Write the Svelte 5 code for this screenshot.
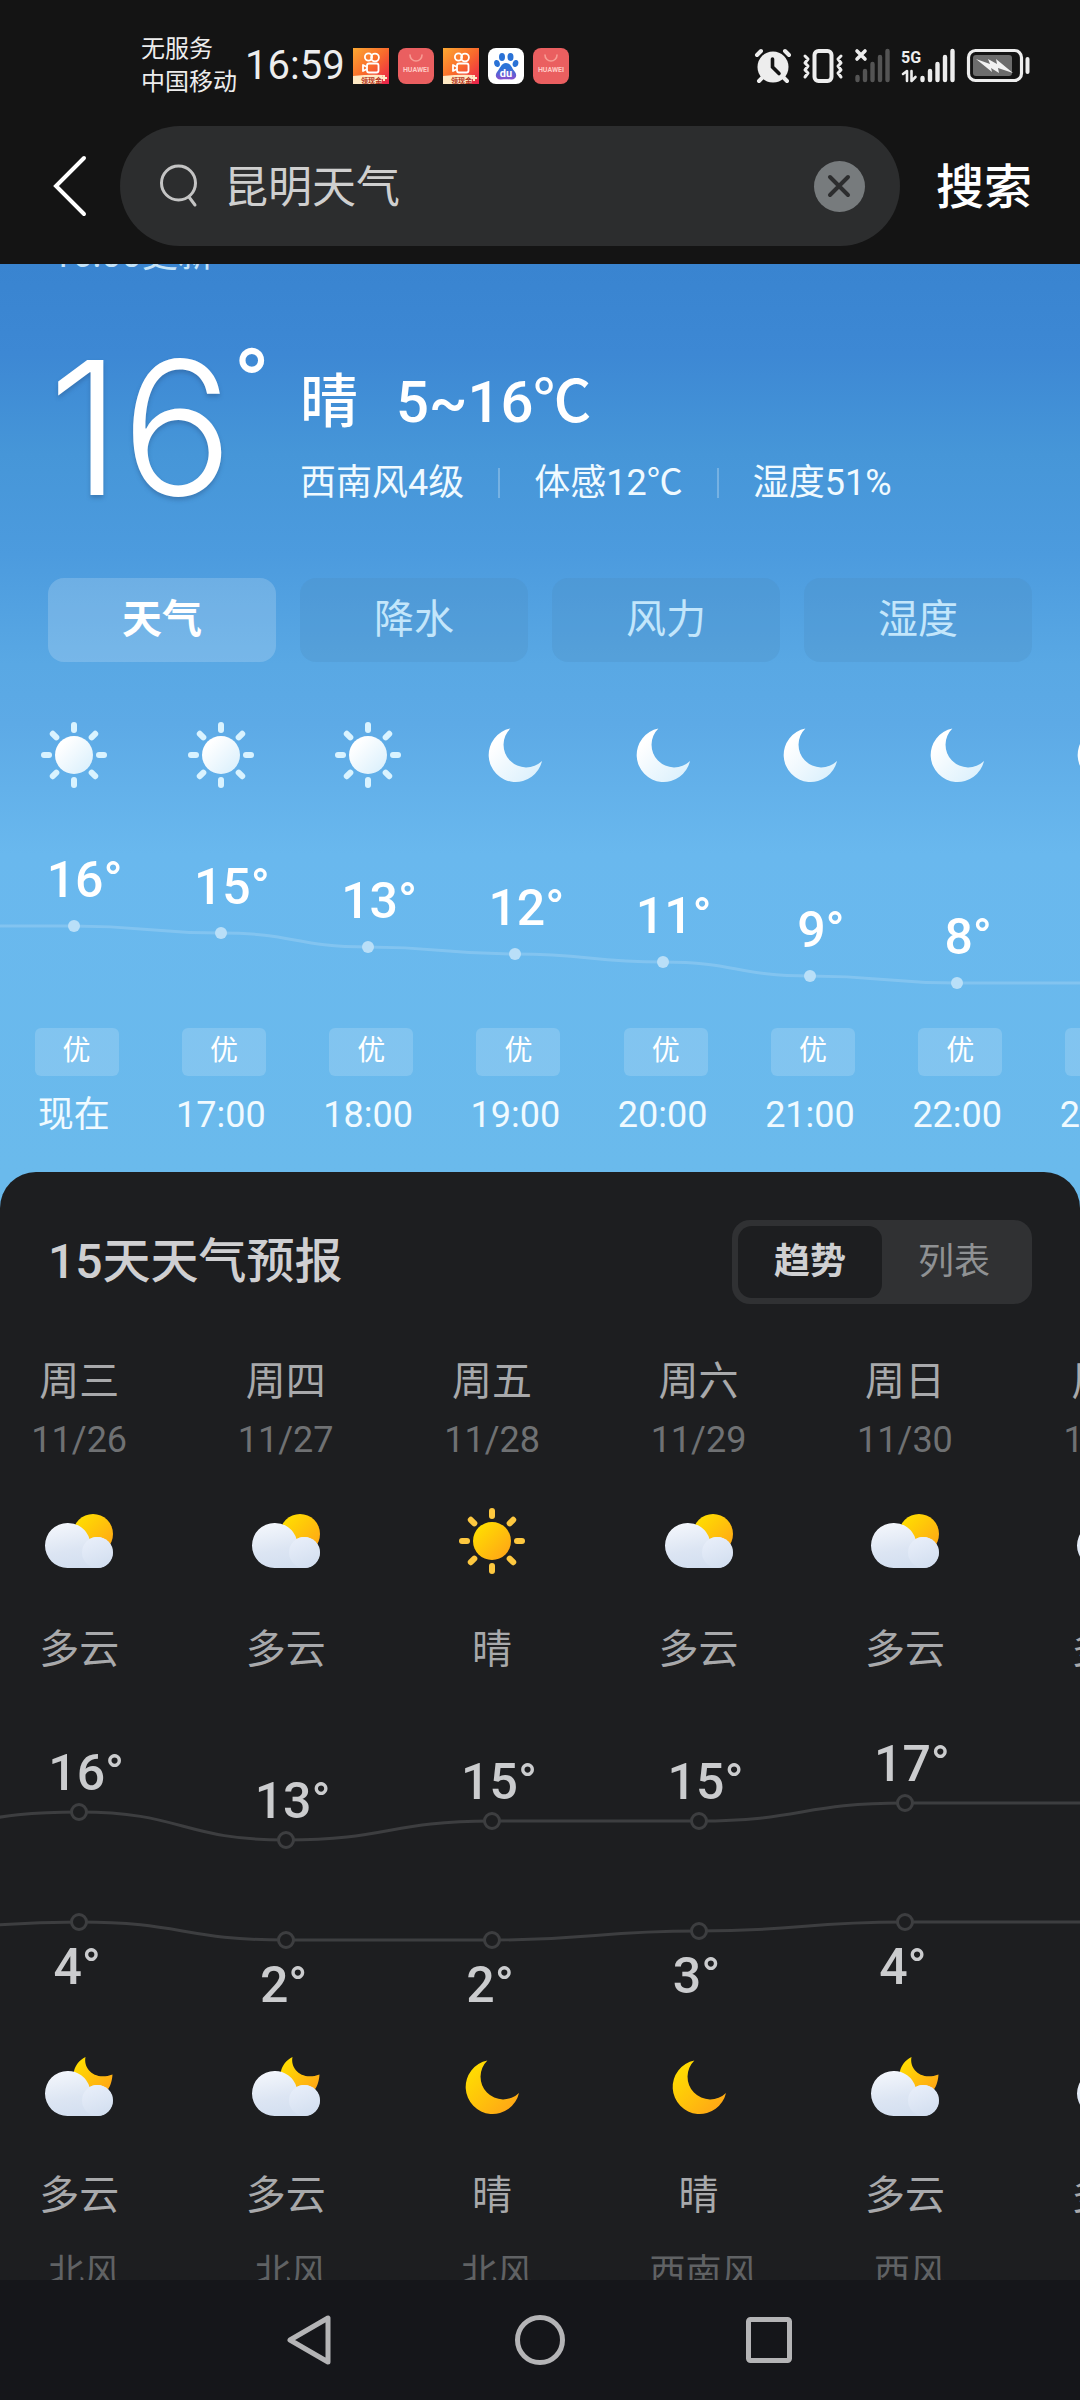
<script>
	let query = '昆明天气';
	let activeTab = '天气';
	let activeView = '趋势';

	const tabs = ['天气', '降水', '风力', '湿度'];
	const views = ['趋势', '列表'];

	const hours = [
		{ time: '现在', icon: 'sun', temp: 16 },
		{ time: '17:00', icon: 'sun', temp: 15 },
		{ time: '18:00', icon: 'sun', temp: 13 },
		{ time: '19:00', icon: 'moon', temp: 12 },
		{ time: '20:00', icon: 'moon', temp: 11 },
		{ time: '21:00', icon: 'moon', temp: 9 },
		{ time: '22:00', icon: 'moon', temp: 8 },
		{ time: '23:00', icon: 'moon', temp: 8 }
	];

	const days = [
		{ name: '周三', date: '11/26', day: 'cloudSun', dayText: '多云', high: 16, low: 4, night: 'cloudMoon', nightText: '多云', wind: '北风' },
		{ name: '周四', date: '11/27', day: 'cloudSun', dayText: '多云', high: 13, low: 2, night: 'cloudMoon', nightText: '多云', wind: '北风' },
		{ name: '周五', date: '11/28', day: 'sun', dayText: '晴', high: 15, low: 2, night: 'moon', nightText: '晴', wind: '北风' },
		{ name: '周六', date: '11/29', day: 'cloudSun', dayText: '多云', high: 15, low: 3, night: 'moon', nightText: '晴', wind: '西南风' },
		{ name: '周日', date: '11/30', day: 'cloudSun', dayText: '多云', high: 17, low: 4, night: 'cloudMoon', nightText: '多云', wind: '西风' },
		{ name: '周一', date: '12/01', day: 'cloudSun', dayText: '多云', high: 17, low: 4, night: 'cloudMoon', nightText: '多云', wind: '西风' }
	];

	const hourY = (t) => Math.round(137 + (16 - t) * 7.1);
	const highY = (t) => Math.round(139 + (16 - t) * 9.2);
	const lowY = (t) => Math.round(249 + (4 - t) * 9.2);

	// one unit per column, the first value belongs to the column before the visible ones
	function curve(ys) {
		let d = `M-0.5 ${ys[0]}`;
		for (let i = 1; i < ys.length; i++) {
			d += ` C${i - 1} ${ys[i - 1]} ${i - 1} ${ys[i]} ${i - 0.5} ${ys[i]}`;
		}
		return d;
	}

	const hourLine = curve([16, ...hours.map((h) => h.temp)].map(hourY));
	const highLine = curve([14, ...days.map((d) => d.high)].map(highY));
	const lowLine = curve([3, ...days.map((d) => d.low)].map(lowY));
	const rays = [0, 45, 90, 135, 180, 225, 270, 315];
</script>

{#snippet cloud()}
	<path d="M22.5 16A22.5 22.5 0 0 0 22.5 61H52.5A15.5 15.5 0 1 0 44.5 32A22.5 22.5 0 0 0 22.5 16Z" fill="url(#cloud)" />
	<circle cx="52.5" cy="45.5" r="15.5" fill="url(#puff)" />
{/snippet}

{#snippet weather(kind, tone)}
	<svg class="weather" viewBox="0 0 68 68" aria-hidden="true">
		{#if kind === 'sun'}
			<g stroke={tone === 'white' ? '#d9f3ff' : '#fdc840'} stroke-width="6" stroke-linecap="round">
				{#each rays as angle}
					<path d="M34 4v5" transform="rotate({angle} 34 34)" />
				{/each}
			</g>
			<circle cx="34" cy="34" r="19" fill="url(#{tone})" />
		{:else if kind === 'moon'}
			<path
				transform="translate(7 7)"
				d="M22.4 .5A27 27 0 1 0 54 33A22.6 22.6 0 0 1 22.4 .5Z"
				fill="url(#{tone})"
			/>
		{:else if kind === 'cloudSun'}
			<circle cx="48" cy="27" r="20" fill="url(#gold)" />
			{@render cloud()}
		{:else}
			<path
				transform="translate(0 4)"
				d="M40.5 0C38 12 50 24 67.5 17.5C67 25 65 31 60 36L32 34C25 21 28 6 40.5 0Z"
				fill="url(#gold)"
			/>
			<g transform="translate(0 2)">
				{@render cloud()}
			</g>
		{/if}
	</svg>
{/snippet}

{#snippet videoApp()}
	<svg class="app" viewBox="0 0 36 36" aria-hidden="true">
		<rect width="36" height="36" fill="url(#video)" />
		<g fill="none" stroke="#fff" stroke-width="1.8">
			<circle cx="15.5" cy="9" r="3.6" />
			<circle cx="22" cy="9.5" r="3.9" />
			<rect x="14" y="15.5" width="11.5" height="9" rx="2" />
			<path d="M14 19l-4-2v6l4-2" stroke-linejoin="round" />
		</g>
		<path d="M0 28q18-2 30-1l-2 9H0z" fill="#ffe9c4" />
		<text x="8" y="35" font-size="7" font-weight="700" fill="#b5321c">领现金</text>
		<path d="M31 27v6M28 30h6" stroke="#ffe9c4" stroke-width="2" />
	</svg>
{/snippet}

{#snippet storeApp()}
	<svg class="app" viewBox="0 0 36 36" aria-hidden="true">
		<rect width="36" height="36" rx="8" fill="#ea5f60" />
		<path d="M12 7a6 6 0 0 0 12 0" fill="none" stroke="#f79c94" stroke-width="1.6" stroke-linecap="round" />
		<text x="18" y="24" text-anchor="middle" font-size="7" font-weight="700" fill="#ffc9c4">HUAWEI</text>
	</svg>
{/snippet}

<svg class="defs" width="0" height="0" aria-hidden="true">
	<defs>
		<linearGradient id="white" x1="0" y1="0" x2="1" y2="1">
			<stop offset="0.2" stop-color="#fff" />
			<stop offset="1" stop-color="#d6eefc" />
		</linearGradient>
		<linearGradient id="gold" x1="0" y1="0" x2="1" y2="1">
			<stop offset="0.1" stop-color="#ffdf00" />
			<stop offset="0.9" stop-color="#ffa616" />
		</linearGradient>
		<linearGradient id="cloud" x1="0.2" y1="0" x2="0.5" y2="1">
			<stop offset="0" stop-color="#f4f7fc" />
			<stop offset="0.6" stop-color="#dce5f3" />
			<stop offset="1" stop-color="#d3dff0" />
		</linearGradient>
		<linearGradient id="puff" x1="0.2" y1="0" x2="0.6" y2="1">
			<stop offset="0" stop-color="#e9effa" />
			<stop offset="1" stop-color="#d3dff0" />
		</linearGradient>
		<linearGradient id="video" x1="0" y1="0" x2="1" y2="1">
			<stop offset="0" stop-color="#fca832" />
			<stop offset="0.5" stop-color="#f96a2c" />
			<stop offset="1" stop-color="#e91f4d" />
		</linearGradient>
		<linearGradient id="paw" x1="0" y1="0" x2="0" y2="1">
			<stop offset="0.3" stop-color="#2d74d8" />
			<stop offset="1" stop-color="#8a4fd0" />
		</linearGradient>
	</defs>
</svg>

<div class="phone">
	<header>
		<div class="status">
			<div class="carrier">
				<span>无服务</span>
				<span>中国移动</span>
			</div>
			<time class="clock">16:59</time>
			<div class="apps">
				{@render videoApp()}
				{@render storeApp()}
				{@render videoApp()}
				<svg class="app" viewBox="0 0 36 36" aria-hidden="true">
					<rect width="36" height="36" rx="8" fill="#fff" />
					<g fill="#2a72d6">
						<ellipse cx="14" cy="9" rx="3" ry="4" />
						<ellipse cx="22.5" cy="9" rx="3" ry="4" />
						<ellipse cx="9" cy="15.5" rx="2.8" ry="3.6" transform="rotate(-15 9 15.5)" />
						<ellipse cx="27.5" cy="15.5" rx="2.8" ry="3.6" transform="rotate(15 27.5 15.5)" />
					</g>
					<path d="M18 15c5 0 6 6 9 9 3 4 0 8-4 7.5-4-.5-6-.5-10 0C9 32 6 28 9 24c3-3 4-9 9-9z" fill="url(#paw)" />
					<text x="18" y="29" text-anchor="middle" font-size="11" font-weight="700" fill="#fff">du</text>
				</svg>
				{@render storeApp()}
			</div>
			<div class="signals">
				<svg width="36" height="34" viewBox="0 0 36 34" aria-hidden="true">
					<path d="M2 6l4-4M34 6l-4-4M8 28l-4 4M28 28l4 4" stroke="#ededed" stroke-width="4" stroke-linecap="round" />
					<circle cx="18" cy="18" r="15.5" fill="#ededed" />
					<path d="M17.5 10v8l6.5 6.5" fill="none" stroke="#141414" stroke-width="3.6" stroke-linecap="round" />
				</svg>
				<svg width="40" height="34" viewBox="0 0 40 34" fill="none" stroke="#ededed" stroke-linecap="round" stroke-linejoin="round" aria-hidden="true">
					<rect x="11.5" y="2" width="17" height="30" rx="4" stroke-width="4" />
					<path d="M2 7l3 3-3 4 3 3-3 4 3 3-3 4M38 7l-3 3 3 4-3 3 3 4-3 3 3 4" stroke-width="3" />
				</svg>
				<svg width="35" height="34" viewBox="0 0 35 34" stroke-linecap="round" aria-hidden="true">
					<path d="M2 2l8 8M10 2l-8 8" stroke="#ededed" stroke-width="3.6" />
					<path d="M2.5 28v3M10 22v9M17.5 15v16M25 8v23M32.5 2v29" stroke="#545454" stroke-width="4.4" />
				</svg>
				<svg width="53" height="34" viewBox="0 0 53 34" fill="none" stroke="#ededed" stroke-linecap="round" aria-hidden="true">
					<text x="-1" y="14" font-size="16" font-weight="700" fill="#ededed" stroke="none">5G</text>
					<path d="M1 25l4-3v10M9.5 22v10l4-4" stroke-width="2.6" stroke-linejoin="round" />
					<path d="M20.5 29v2M28 22v9M35.5 15v16M43 8v23M50.5 2v29" stroke-width="4.4" />
				</svg>
				<svg width="63" height="34" viewBox="0 0 63 34" aria-hidden="true">
					<rect x="1.5" y="1.5" width="53" height="30" rx="7" fill="none" stroke="#ededed" stroke-width="3.2" />
					<rect x="6" y="6" width="39" height="21" rx="3" fill="#6c6c6c" />
					<path d="M9 10l14 5-2-5 9 5-1-5 17 14-15-5 1 5-8-5 1 4z" fill="#f2f2f2" />
					<rect x="58.5" y="8" width="4" height="17" rx="2" fill="#ededed" />
				</svg>
			</div>
		</div>

		<form class="search" on:submit|preventDefault>
			<button type="button" class="back" aria-label="返回">
				<svg width="36" height="60" viewBox="0 0 36 60" aria-hidden="true">
					<path d="M36 2L8 30L36 58" fill="none" stroke="#fff" stroke-width="4" stroke-linecap="round" />
				</svg>
			</button>
			<div class="field">
				<svg width="38" height="46" viewBox="0 0 38 46" fill="none" stroke="#c4c4c4" stroke-width="3" aria-hidden="true">
					<circle cx="18.5" cy="20" r="17" />
					<path d="M29 34l6 8" stroke-linecap="round" />
				</svg>
				<input type="text" aria-label="搜索内容" bind:value={query} />
				<button type="button" class="clear" aria-label="清除" on:click={() => (query = '')}>
					<svg width="24" height="24" viewBox="0 0 24 24" aria-hidden="true">
						<path d="M3 3l18 18M21 3L3 21" stroke="#2c2d2e" stroke-width="4" stroke-linecap="round" />
					</svg>
				</button>
			</div>
			<button type="submit" class="go">搜索</button>
		</form>
	</header>

	<main>
		<p class="updated">16:00更新</p>

		<section class="now">
			<div class="big">16<span>°</span></div>
			<div class="info">
				<div class="summary"><span>晴</span><span>5~16℃</span></div>
				<ul class="facts">
					<li>西南风4级</li>
					<li>体感12℃</li>
					<li>湿度51%</li>
				</ul>
			</div>
		</section>

		<nav class="tabs">
			{#each tabs as tab}
				<button class:active={tab === activeTab} on:click={() => (activeTab = tab)}>{tab}</button>
			{/each}
		</nav>

		<section class="hourly">
			{#each hours as hour}
				<div class="hour">
					{@render weather(hour.icon, 'white')}
					<div class="plot">
						<div class="temp" style="margin-top: {hourY(hour.temp) - 76}px">{hour.temp}°</div>
						<div class="dot"></div>
					</div>
					<span class="badge">优</span>
					<time>{hour.time}</time>
				</div>
			{/each}
			<svg class="line" viewBox="0 0 {hours.length} 239" preserveAspectRatio="none" aria-hidden="true">
				<path d={hourLine} vector-effect="non-scaling-stroke" />
			</svg>
		</section>

		<section class="sheet">
			<div class="sheet-head">
				<h2>15天天气预报</h2>
				<div class="toggle">
					{#each views as view}
						<button class:active={view === activeView} on:click={() => (activeView = view)}>{view}</button>
					{/each}
				</div>
			</div>

			<div class="daily">
				{#each days as day}
					<div class="day">
						<div class="name">{day.name}</div>
						<div class="date">{day.date}</div>
						{@render weather(day.day, 'gold')}
						<div class="cond">{day.dayText}</div>
						<div class="plot">
							<div class="temp high" style="margin-top: {highY(day.high) - 69}px">{day.high}°</div>
							<div class="ring"></div>
							<div class="ring" style="margin-top: {lowY(day.low) - highY(day.high) - 18}px"></div>
							<div class="temp low">{day.low}°</div>
						</div>
						{@render weather(day.night, 'gold')}
						<div class="cond">{day.nightText}</div>
						<div class="wind">{day.wind}</div>
					</div>
				{/each}
				<svg class="line" viewBox="0 0 {days.length} 380" preserveAspectRatio="none" aria-hidden="true">
					<path d={highLine} vector-effect="non-scaling-stroke" />
					<path d={lowLine} vector-effect="non-scaling-stroke" />
				</svg>
			</div>
		</section>
	</main>

	<footer>
		<button aria-label="后退">
			<svg width="50" height="50" viewBox="0 0 50 50" aria-hidden="true">
				<path d="M42 3v44L4 25z" />
			</svg>
		</button>
		<button aria-label="主屏幕">
			<svg width="50" height="50" viewBox="0 0 50 50" aria-hidden="true">
				<circle cx="25" cy="25" r="22.5" />
			</svg>
		</button>
		<button aria-label="最近任务">
			<svg width="50" height="50" viewBox="0 0 50 50" aria-hidden="true">
				<rect x="4.5" y="4.5" width="41" height="41" rx="2" />
			</svg>
		</button>
	</footer>
</div>

<style>
	:global(body) {
		background: #141414;
	}

	.phone {
		display: flex;
		flex-direction: column;
		height: 100vh;
		overflow: hidden;
		font-family: Roboto, 'Noto Sans CJK SC', sans-serif;
		color: #fff;
	}

	.phone *,
	.phone {
		box-sizing: border-box;
	}

	.defs {
		position: absolute;
	}

	svg {
		display: block;
		flex: none;
		overflow: visible;
	}

	button {
		padding: 0;
		border: none;
		background: none;
		color: inherit;
		font: inherit;
		cursor: pointer;
	}

	header {
		flex: none;
		padding: 33px 0 18px;
		background: #141414;
	}

	.status {
		display: flex;
		align-items: center;
		gap: 8px;
		padding: 0 50px 0 141px;
		color: #ededed;
	}

	.carrier {
		display: flex;
		flex-direction: column;
		font-size: 24px;
		line-height: 33px;
	}

	.clock {
		font-size: 40px;
		font-weight: 400;
		line-height: 66px;
	}

	.apps {
		display: flex;
		gap: 9px;
	}

	.app {
		width: 36px;
		height: 36px;
	}

	.signals {
		display: flex;
		gap: 12px;
		margin-left: auto;
	}

	.search {
		display: flex;
		align-items: center;
		gap: 36px;
		margin-top: 27px;
		padding: 0 48px;
	}

	.field {
		display: flex;
		flex: 1;
		align-items: center;
		gap: 26px;
		min-width: 0;
		height: 120px;
		padding: 0 35px 0 40px;
		border-radius: 60px;
		background: #2c2d2e;
	}

	.field input {
		flex: 1;
		min-width: 0;
		padding: 4px 0 0;
		border: none;
		outline: none;
		background: none;
		color: #cfcfcf;
		font: inherit;
		font-size: 44px;
		line-height: 60px;
	}

	.clear {
		display: grid;
		place-items: center;
		width: 51px;
		height: 51px;
		border-radius: 50%;
		background: #777b7d;
	}

	.go {
		padding-top: 4px;
		font-size: 48px;
		font-weight: 500;
		line-height: 60px;
	}

	main {
		flex: 1;
		min-height: 0;
		overflow: hidden;
		background: linear-gradient(
			#3984d0 0,
			#3d88d4 90px,
			#4696d8 190px,
			#4c9bde 290px,
			#59a8e4 400px,
			#5daae6 460px,
			#69b8ee 590px,
			#6abaec 908px
		);
	}

	.updated {
		margin: -29px 52px 0;
		font-size: 36px;
		line-height: 40px;
		color: #c4e3f8;
	}

	.now {
		display: flex;
		margin-top: 71px;
		padding: 0 48px;
	}

	.big {
		display: flex;
		width: 252px;
		font-family: Inter, Roboto, sans-serif;
		font-size: 186px;
		font-weight: 300;
		line-height: 164px;
		text-shadow: 0 3px 4px rgba(40, 80, 130, 0.4);
	}

	.big span {
		font-family: Roboto, sans-serif;
		font-size: 100px;
		font-weight: 400;
		line-height: 80px;
		text-shadow: none;
	}

	.info {
		padding-top: 20px;
	}

	.summary {
		display: flex;
		gap: 38px;
		font-size: 58px;
		font-weight: 500;
		line-height: 72px;
	}

	.facts {
		display: flex;
		align-items: center;
		margin: 21px 0 0;
		padding: 0;
		list-style: none;
		font-size: 36px;
		line-height: 48px;
		color: #f0faff;
	}

	.facts li {
		display: flex;
		align-items: center;
	}

	.facts li + li::before {
		content: '';
		width: 2px;
		height: 30px;
		margin: 0 34px;
		background: rgba(255, 255, 255, 0.25);
	}

	.tabs {
		display: grid;
		grid-template-columns: repeat(4, 1fr);
		gap: 24px;
		margin-top: 68px;
		padding: 0 48px;
	}

	.tabs button {
		height: 84px;
		border-radius: 16px;
		background: rgba(76, 138, 190, 0.24);
		color: #c3e6fb;
		font-size: 40px;
		line-height: 84px;
	}

	.tabs .active {
		background: rgba(255, 255, 255, 0.18);
		color: #fff;
		font-weight: 700;
	}

	.hourly,
	.daily {
		position: relative;
		display: grid;
		grid-auto-flow: column;
	}

	.hourly {
		grid-auto-columns: calc(100% * 3 / 22);
		margin-top: 59px;
		padding-bottom: 35px;
	}

	.hour,
	.day,
	.plot {
		display: flex;
		flex-direction: column;
		align-items: center;
	}

	.weather {
		width: 68px;
		height: 68px;
	}

	.plot {
		position: relative;
		z-index: 1;
	}

	.hour .plot {
		height: 239px;
	}

	.temp {
		padding-left: 22px;
		font-size: 50px;
		font-weight: 500;
		line-height: 60px;
	}

	.dot {
		width: 12px;
		height: 12px;
		margin-top: 10px;
		border-radius: 50%;
		background: #b9dff8;
	}

	.badge {
		width: 84px;
		height: 48px;
		margin-left: 6px;
		border-radius: 6px;
		background: rgba(255, 255, 255, 0.16);
		font-size: 28px;
		line-height: 46px;
		text-align: center;
	}

	.hour time {
		margin-top: 17px;
		font-size: 36px;
		line-height: 44px;
		white-space: nowrap;
		color: #f0faff;
	}

	/* the curves run behind the plots of all the columns */
	.line {
		position: absolute;
		left: 0;
		fill: none;
		stroke-width: 3;
	}

	.hourly .line {
		top: 68px;
		width: calc(800% * 3 / 22);
		height: 239px;
		stroke: rgba(255, 255, 255, 0.17);
	}

	.sheet {
		padding: 48px 0 0;
		border-radius: 36px 36px 0 0;
		background: #1d1e20;
	}

	.sheet-head {
		display: flex;
		align-items: center;
		justify-content: space-between;
		padding: 0 48px;
	}

	h2 {
		margin: 0;
		font-size: 48px;
		font-weight: 500;
		line-height: 60px;
		color: #cfcfd1;
	}

	.toggle {
		display: grid;
		grid-template-columns: 1fr 1fr;
		width: 300px;
		padding: 6px;
		border-radius: 18px;
		background: #303133;
	}

	.toggle button {
		height: 72px;
		border-radius: 14px;
		font-size: 36px;
		line-height: 72px;
		color: #8f9193;
	}

	.toggle .active {
		background: #1d1e20;
		font-weight: 700;
		color: #cfd0d2;
	}

	.daily {
		grid-auto-columns: 18.7%;
		margin: 54px 0 0 -24px;
	}

	.daily .line {
		top: 315px;
		width: calc(6 * 18.7%);
		height: 380px;
		stroke: #3d3e40;
	}

	.name,
	.cond {
		font-size: 40px;
		line-height: 48px;
		color: #a8a9ab;
	}

	.date {
		margin: 14px 0 47px;
		font-size: 36px;
		line-height: 40px;
		color: #6f7173;
	}

	.weather + .cond {
		margin-top: 52px;
		line-height: 46px;
	}

	.day .plot {
		height: 380px;
	}

	.day .temp {
		padding-left: 14px;
		color: #cbccce;
	}

	.day .low {
		margin-top: 6px;
		padding: 0 4px 0 0;
	}

	.ring {
		width: 18px;
		height: 18px;
		border: 3px solid #3d3e40;
		border-radius: 50%;
		background: #1d1e20;
	}

	.wind {
		margin-top: 34px;
		padding-left: 10px;
		font-size: 36px;
		line-height: 40px;
		color: #606264;
	}

	footer {
		display: flex;
		flex: none;
		align-items: center;
		justify-content: center;
		gap: 179px;
		height: 120px;
		background: #15161a;
	}

	footer svg {
		fill: none;
		stroke: #b4b4b6;
		stroke-width: 5;
		stroke-linejoin: round;
	}
</style>
